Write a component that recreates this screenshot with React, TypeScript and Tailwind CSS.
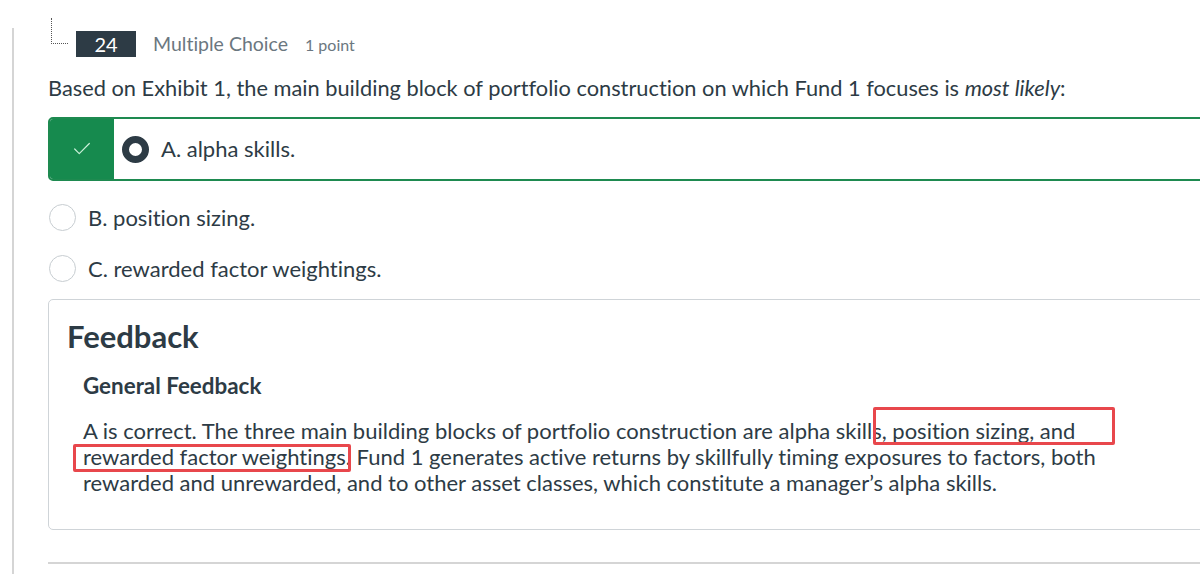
import { Check } from 'lucide-react';

function Radio({ checked }: { checked?: boolean }) {
  if (checked) {
    return <span className="block w-[27px] h-[27px] rounded-full border-[7px] border-[#2d3b45] bg-white shrink-0" />;
  }
  return <span className="block w-[27px] h-[27px] rounded-full border border-[#c7cdd1] bg-white shrink-0" />;
}

export default function App() {
  return (
    <div className="w-[1200px] h-[574px] overflow-hidden bg-white text-[#2d3b45] [font-variant-ligatures:none]" style={{ fontFamily: 'Lato, "Open Sans", sans-serif' }}>
      <div className="ml-[12px] mt-[28px] h-[546px] border-l-2 border-[#d5d5d5] pl-[34px] pt-[3px]">
        {/* header */}
        <div className="flex items-start">
          <div className="mt-[-13px] ml-[3px] h-[26px] w-[17px] border-l border-b border-dotted border-[#555]" />
          <div className="ml-[8px] flex h-[26px] w-[60px] items-center justify-center bg-[#2d3b45] text-[20px] text-white">24</div>
          <div className="ml-[17px] flex h-[26px] items-center text-[19.5px] text-[#6b7780]">Multiple Choice</div>
          <div className="ml-[17px] flex h-[26px] items-center pt-[2px] text-[16px] text-[#6b7780]">1 point</div>
        </div>

        <p className="mt-[18px] text-[21.8px] leading-[26px]">
          Based on Exhibit 1, the main building block of portfolio construction on which Fund 1 focuses is <em>most likely</em>:
        </p>

        {/* answers */}
        <div className="mt-[16px] w-[1200px] flex h-[64px] rounded-[5px] border-2 border-[#1e8a50] overflow-hidden">
          <div className="flex w-[64px] items-center justify-center bg-[#168a4e]">
            <Check className="w-[22px] h-[22px] text-[#c9f0d8]" strokeWidth={1.3} />
          </div>
          <div className="flex items-center gap-[12px] pl-[8px]">
            <Radio checked />
            <span className="text-[22px] leading-[26px]">A. alpha skills.</span>
          </div>
        </div>

        <div className="mt-[23px] flex h-[27px] items-center gap-[12px] pl-[1px]">
          <Radio />
          <span className="text-[22px] leading-[26px]">B. position sizing.</span>
        </div>
        <div className="mt-[24px] flex h-[27px] items-center gap-[12px] pl-[1px]">
          <Radio />
          <span className="text-[22px] leading-[26px]">C. rewarded factor weightings.</span>
        </div>

        {/* feedback */}
        <div className="relative mt-[17px] h-[231px] w-[1200px] rounded-[5px] border border-[#cfd4d8] pl-[18px] pt-[18px]">
          <h2 className="text-[31px] font-bold leading-[36px]">Feedback</h2>
          <div className="pl-[16px]">
            <h3 className="mt-[19px] text-[22.4px] font-bold leading-[26px]">General Feedback</h3>
            <p className="mt-[19px] w-[1034px] text-[22px] leading-[26px]">
              A is correct. The three main building blocks of portfolio construction are alpha skills, position sizing, and rewarded factor weightings. Fund 1 generates active returns by skillfully timing exposures to factors, both rewarded and unrewarded, and to other asset classes, which constitute a manager’s alpha skills.
            </p>
          </div>
          {/* annotation boxes */}
          <div className="absolute left-[824px] top-[107px] h-[38px] w-[242px] rounded-[2px] border-[3px] border-[#e8474c]" />
          <div className="absolute left-[24px] top-[144px] h-[28px] w-[278px] rounded-[2px] border-[3px] border-[#e8474c]" />
        </div>

        <div className="mt-[32px] w-[1200px] border-t-2 border-[#d5d5d5]" />
      </div>
    </div>
  );
}
